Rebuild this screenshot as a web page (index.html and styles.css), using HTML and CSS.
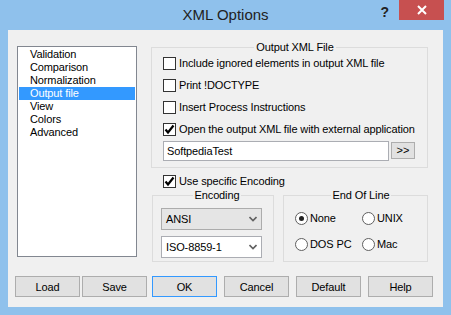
FILE: index.html
```html
<!DOCTYPE html>
<html>
<head>
  <title>XML Options</title>
  <link rel="stylesheet" href="styles.css">
</head>
<body>
  <div class="window">
    <div class="titlebar">
      <span></span>
      <span class="title">XML Options</span>
      <div class="caption-btns">
        <span class="help">?</span>
        <span class="close">
          <svg width="10" height="10" viewBox="0 0 10 10"><path d="M1 1 L9 9 M9 1 L1 9" stroke="#fff" stroke-width="2"/></svg>
        </span>
      </div>
    </div>

    <div class="client">
      <div class="main">
        <ul class="pages">
          <li>Validation</li>
          <li>Comparison</li>
          <li>Normalization</li>
          <li class="selected">Output file</li>
          <li>View</li>
          <li>Colors</li>
          <li>Advanced</li>
        </ul>

        <div class="panel">
          <fieldset class="group output">
            <legend>Output XML File</legend>
            <label class="check"><span class="box"></span>Include ignored elements in output XML file</label>
            <label class="check"><span class="box"></span>Print !DOCTYPE</label>
            <label class="check"><span class="box"></span>Insert Process Instructions</label>
            <label class="check"><span class="box"><svg width="11" height="11" viewBox="0 0 11 11"><path d="M1.5 5.5 L4 8.5 L9.5 1.5" fill="none" stroke="#000" stroke-width="2.2"/></svg></span>Open the output XML file with external application</label>
            <div class="path-row">
              <input class="path" type="text" value="SoftpediaTest" spellcheck="false">
              <button class="browse">&gt;&gt;</button>
            </div>
          </fieldset>

          <label class="check enc-check"><span class="box"><svg width="11" height="11" viewBox="0 0 11 11"><path d="M1.5 5.5 L4 8.5 L9.5 1.5" fill="none" stroke="#000" stroke-width="2.2"/></svg></span>Use specific Encoding</label>

          <div class="lower">
            <fieldset class="group encoding">
              <legend>Encoding</legend>
              <div class="combo flat">ANSI
                <svg width="8" height="6" viewBox="0 0 8 6"><path d="M0.5 1 L4 4.5 L7.5 1" fill="none" stroke="#606060" stroke-width="1.6"/></svg>
              </div>
              <div class="combo">ISO-8859-1
                <svg width="8" height="6" viewBox="0 0 8 6"><path d="M0.5 1 L4 4.5 L7.5 1" fill="none" stroke="#606060" stroke-width="1.6"/></svg>
              </div>
            </fieldset>

            <fieldset class="group eol">
              <legend>End Of Line</legend>
              <div class="radios">
                <label class="radio"><span class="dot on"></span>None</label>
                <label class="radio"><span class="dot"></span>UNIX</label>
                <label class="radio"><span class="dot"></span>DOS PC</label>
                <label class="radio"><span class="dot"></span>Mac</label>
              </div>
            </fieldset>
          </div>
        </div>
      </div>

      <div class="buttons">
        <div class="btn-group left">
          <button class="btn">Load</button>
          <button class="btn">Save</button>
        </div>
        <div class="btn-group right">
          <button class="btn default">OK</button>
          <button class="btn">Cancel</button>
          <button class="btn">Default</button>
          <button class="btn">Help</button>
        </div>
      </div>
    </div>
  </div>
</body>
</html>
```

FILE: styles.css
```css
* { box-sizing: border-box; }

body {
  margin: 0;
  background: #8fc1ec;
  font-family: "Liberation Sans", Arial, sans-serif;
  font-size: 11px;
  letter-spacing: -0.12px;
  color: #000;
}

.window {
  width: 451px;
  height: 315px;
  background: #8fc1ec;
}

.titlebar {
  height: 30px;
  display: grid;
  grid-template-columns: 1fr auto 1fr;
  align-items: start;
}
.title {
  font-size: 15px;
  letter-spacing: 0;
  line-height: 30px;
  color: #222;
}
.caption-btns {
  justify-self: end;
  display: flex;
  align-items: flex-start;
  margin-right: 7px;
}
.help {
  font-size: 14px;
  font-weight: bold;
  color: #222;
  margin-top: 4px;
  margin-right: 10px;
}
.close {
  width: 45px;
  height: 20px;
  background: #c75050;
  display: flex;
  align-items: center;
  justify-content: center;
}

.client {
  margin: 0 8px;
  height: 277px;
  background: #f0f0f0;
  display: flex;
  flex-direction: column;
}

.main {
  display: flex;
  align-items: flex-start;
  padding: 11px 0 0 9px;
}

.pages {
  list-style: none;
  margin: 5px 0 0 0;
  padding: 1px;
  width: 120px;
  height: 211px;
  background: #fff;
  border: 1px solid #828790;
}
.pages li {
  line-height: 13px;
  padding-left: 11px;
}
.pages li.selected {
  background: #3399ff;
  color: #fff;
}

.panel {
  margin-left: 14px;
  width: 277px;
}

.group {
  margin: 0;
  border: 1px solid #dcdcdc;
  min-width: 0;
}
.group legend {
  margin: 0 auto;
  padding: 0 2px;
  line-height: 13px;
}

.output {
  padding: 3px 0 6px 11px;
}

.check {
  display: flex;
  align-items: center;
  gap: 3px;
  line-height: 13px;
  margin-bottom: 9px;
}
.box {
  width: 13px;
  height: 13px;
  border: 1px solid #333;
  background: #fff;
  display: flex;
  align-items: center;
  justify-content: center;
  flex-shrink: 0;
}

.path-row {
  display: flex;
  align-items: flex-start;
  margin-top: -4px;
}
.path {
  width: 226px;
  height: 20px;
  border: 1px solid #abadb3;
  padding: 0 3px;
  font: inherit;
  letter-spacing: inherit;
  outline: none;
}
.browse {
  margin: 1px 0 0 2px;
  width: 24px;
  height: 17px;
  padding: 0;
  border: 1px solid #adadad;
  background: #e1e1e1;
  font: inherit;
  line-height: 15px;
}

.enc-check {
  margin: 7px 0 1px 12px;
}

.lower {
  display: flex;
  gap: 9px;
  margin-left: 1px;
}

.encoding {
  width: 122px;
  height: 73px;
  padding: 6px 0 0 8px;
  display: flex;
  flex-direction: column;
  gap: 6px;
}
.combo {
  width: 101px;
  height: 22px;
  border: 1px solid #abadb3;
  background: #fff;
  display: flex;
  align-items: center;
  justify-content: space-between;
  padding: 0 4px 0 4px;
}
.combo.flat {
  background: #e5e5e5;
  border-color: #acacac;
}

.eol {
  width: 145px;
  height: 73px;
  padding: 10px 0 0 11px;
}
.radios {
  display: grid;
  grid-template-columns: 67px auto;
  row-gap: 13px;
}
.radio {
  display: flex;
  align-items: center;
  gap: 2px;
  line-height: 13px;
}
.dot {
  width: 13px;
  height: 13px;
  border-radius: 50%;
  border: 1px solid #5f5f5f;
  background: #fff;
  display: flex;
  align-items: center;
  justify-content: center;
}
.dot.on::after {
  content: "";
  width: 5px;
  height: 5px;
  border-radius: 50%;
  background: #222;
}

.buttons {
  margin-top: auto;
  display: flex;
  gap: 5px;
  padding: 0 0 10px 7px;
}
.btn-group { display: flex; }
.btn-group.left { gap: 2px; }
.btn-group.right { gap: 7px; }
.btn {
  width: 65px;
  height: 21px;
  padding: 0;
  border: 1px solid #adadad;
  background: #e1e1e1;
  font: inherit;
  letter-spacing: inherit;
  color: #000;
}
.btn.default { border-color: #3399ff; }
```
